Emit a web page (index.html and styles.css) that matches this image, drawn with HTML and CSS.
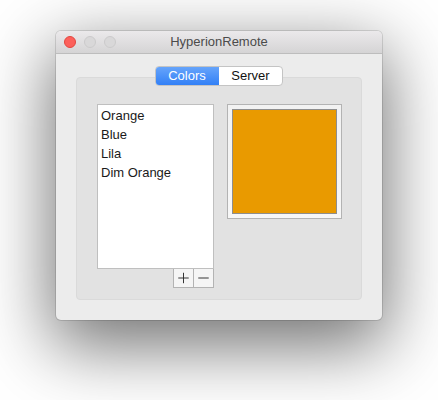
FILE: index.html
```html
<!DOCTYPE html>
<html>
<head>
<meta charset="utf-8">
<link rel="stylesheet" href="styles.css">
</head>
<body>
<div class="window">
  <div class="titlebar">
    <div class="lights">
      <span class="light red"></span>
      <span class="light"></span>
      <span class="light"></span>
    </div>
    <div class="title">HyperionRemote</div>
  </div>
  <div class="content">
    <div class="segmented">
      <div class="seg active">Colors</div>
      <div class="seg">Server</div>
    </div>
    <div class="tabbox">
      <div class="listcol">
        <ul class="list">
          <li>Orange</li>
          <li>Blue</li>
          <li>Lila</li>
          <li>Dim Orange</li>
        </ul>
        <div class="buttons">
          <div class="btn"><svg width="20" height="18" viewBox="0 0 20 18"><path d="M10 3.5v11M4.5 9h11" stroke="#2a2a2a" stroke-width="1" fill="none"/></svg></div>
          <div class="btn"><svg width="20" height="18" viewBox="0 0 20 18"><path d="M4.5 9h11" stroke="#2a2a2a" stroke-width="1" fill="none"/></svg></div>
        </div>
      </div>
      <div class="well">
        <div class="swatch"></div>
      </div>
    </div>
  </div>
</div>
</body>
</html>
```
FILE: styles.css
```css
html, body {
  margin: 0;
  background: #ffffff;
}
body {
  padding: 31px 0 0 56px;
  height: 400px;
  box-sizing: border-box;
  font-family: "Liberation Sans", Arial, sans-serif;
  font-size: 13px;
  color: #1a1a1a;
  overflow: hidden;
}
.window {
  width: 326px;
  height: 289px;
  background: #ececec;
  border-radius: 5px;
  box-shadow: 0 22px 70px 4px rgba(0,0,0,0.56), 0 0 0 1px rgba(0,0,0,0.12);
  display: flex;
  flex-direction: column;
  overflow: hidden;
}
.titlebar {
  height: 22px;
  border-bottom: 1px solid #bdbdbd;
  background: linear-gradient(#ebe9eb, #d5d4d5);
  display: flex;
  align-items: center;
  position: relative;
}
.lights {
  display: flex;
  gap: 8px;
  padding-left: 8px;
}
.light {
  width: 12px;
  height: 12px;
  border-radius: 50%;
  box-sizing: border-box;
  background: #d9d8d9;
  border: 1px solid #cbcacb;
}
.light.red {
  background: #fc605b;
  border-color: #e2463f;
}
.title {
  position: absolute;
  left: 0;
  right: 0;
  text-align: center;
  color: #4b4b4b;
  font-size: 13px;
  line-height: 22px;
}
.content {
  padding: 12px 20px 0;
  display: flex;
  flex-direction: column;
  align-items: center;
}
.segmented {
  display: flex;
  height: 20px;
  box-sizing: border-box;
  border: 1px solid #c4c4c4;
  border-radius: 4px;
  background: #fff;
  position: relative;
  z-index: 2;
  overflow: hidden;
}
.seg {
  line-height: 18px;
  font-size: 13px;
  text-align: center;
  color: #111;
}
.seg.active {
  width: 64px;
  background: linear-gradient(#69a6fb, #2f7ef6);
  color: #fff;
  margin: -1px 0 -1px -1px;
  line-height: 20px;
}
.seg:not(.active) {
  width: 63px;
}
.tabbox {
  margin-top: -9px;
  width: 286px;
  height: 223px;
  box-sizing: border-box;
  background: #e2e2e2;
  border: 1px solid #dadada;
  border-radius: 4px;
  padding: 26px 19px 0 20px;
  display: flex;
  gap: 13px;
  align-items: flex-start;
}
.listcol {
  display: flex;
  flex-direction: column;
  align-items: flex-end;
}
.list {
  list-style: none;
  margin: 0;
  padding: 1px 0;
  width: 117px;
  height: 165px;
  box-sizing: border-box;
  background: #fff;
  border: 1px solid #bfbfbf;
}
.list li {
  height: 19px;
  line-height: 19px;
  padding-left: 3px;
  color: #1a1a1a;
}
.buttons {
  display: flex;
  border: 1px solid #b3b3b3;
  border-top: none;
  background: #f5f5f5;
}
.btn {
  width: 19px;
  height: 18px;
  display: flex;
  align-items: center;
  justify-content: center;
}
.btn + .btn {
  border-left: 1px solid #b3b3b3;
}
.btn svg {
  display: block;
}
.well {
  width: 115px;
  height: 115px;
  box-sizing: border-box;
  border: 1px solid #b3b3b3;
  background: linear-gradient(#f2f2f2, #f7f7f7);
  padding: 4px;
}
.swatch {
  width: 100%;
  height: 100%;
  box-sizing: border-box;
  border: 1px solid #8e8e8e;
  background: #e99a00;
}
```
